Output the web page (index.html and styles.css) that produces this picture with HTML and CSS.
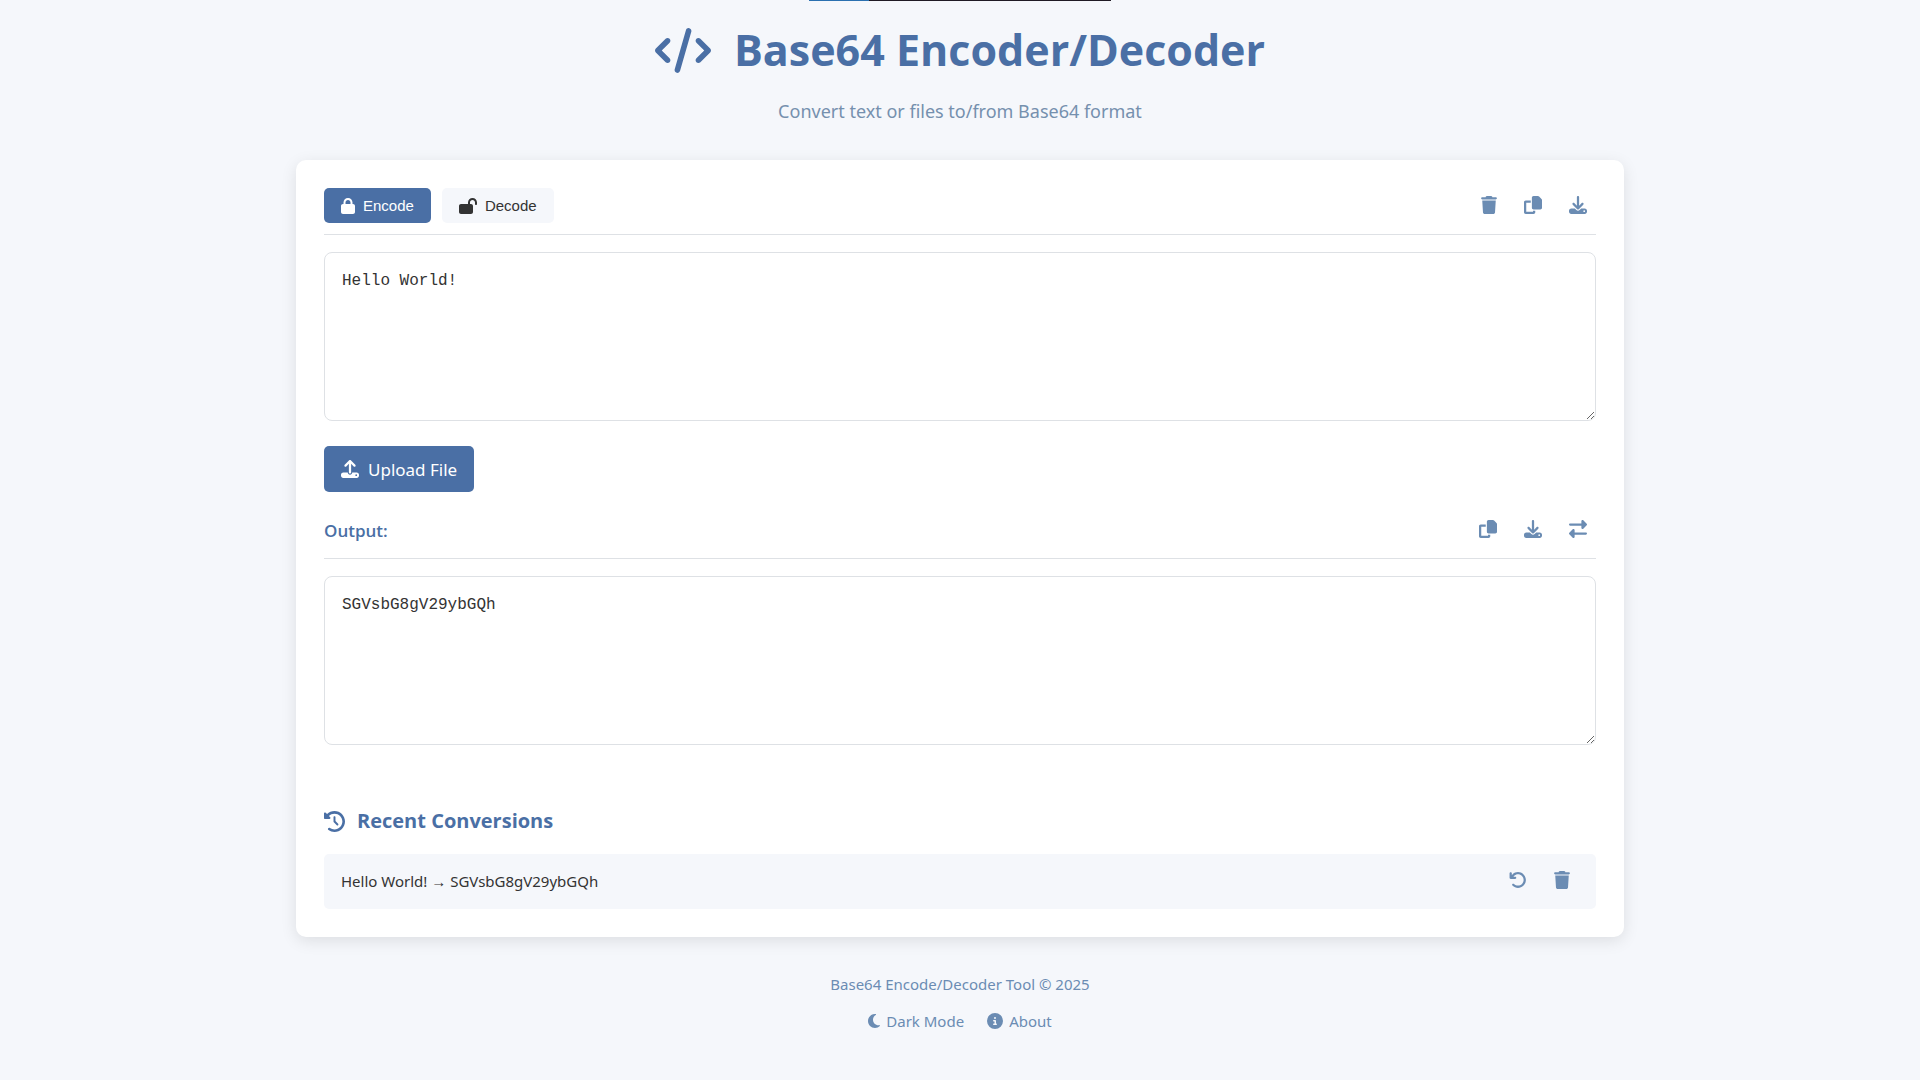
FILE: index.html
```html
<!DOCTYPE html>
<html lang="en">
<head>
<meta charset="UTF-8">
<meta name="viewport" content="width=device-width, initial-scale=1">
<title>Base64 Encoder/Decoder</title>
<link rel="stylesheet" href="styles.css">
</head>
<body>
<svg class="sprite" aria-hidden="true">
  <symbol id="code" viewBox="0 0 640 512"><path d="M392.8 1.2c-17-4.9-34.7 5-39.6 22l-128 448c-4.9 17 5 34.7 22 39.6s34.7-5 39.6-22l128-448c4.9-17-5-34.7-22-39.6zm80.6 120.1c-12.5 12.5-12.5 32.8 0 45.3L562.7 256l-89.4 89.4c-12.5 12.5-12.5 32.8 0 45.3s32.8 12.5 45.3 0l112-112c12.5-12.5 12.5-32.8 0-45.3l-112-112c-12.5-12.5-32.8-12.5-45.3 0zm-306.7 0c-12.5-12.5-32.8-12.5-45.3 0l-112 112c-12.5 12.5-12.5 32.8 0 45.3l112 112c12.5 12.5 32.8 12.5 45.3 0s12.5-32.8 0-45.3L77.3 256l89.4-89.4c12.5-12.5 12.5-32.8 0-45.3z"/></symbol>
  <symbol id="lock" viewBox="0 0 448 512"><path d="M144 144v48H304V144c0-44.2-35.8-80-80-80s-80 35.8-80 80zM80 192V144C80 64.5 144.5 0 224 0s144 64.5 144 144v48h16c35.3 0 64 28.7 64 64V448c0 35.3-28.7 64-64 64H64c-35.3 0-64-28.7-64-64V256c0-35.3 28.7-64 64-64H80z"/></symbol>
  <symbol id="lock-open" viewBox="0 0 576 512"><path d="M352 144c0-44.2 35.8-80 80-80s80 35.8 80 80v48c0 17.7 14.3 32 32 32s32-14.3 32-32V144C576 64.5 511.5 0 432 0S288 64.5 288 144v48H64c-35.3 0-64 28.7-64 64V448c0 35.3 28.7 64 64 64H384c35.3 0 64-28.7 64-64V256c0-35.3-28.7-64-64-64H352V144z"/></symbol>
  <symbol id="trash" viewBox="0 0 448 512"><path d="M135.2 17.7L128 32H32C14.3 32 0 46.3 0 64S14.3 96 32 96H416c17.7 0 32-14.3 32-32s-14.3-32-32-32H320l-7.2-14.3C307.4 6.8 296.3 0 284.2 0H163.8c-12.1 0-23.2 6.8-28.6 17.7zM416 128H32L53.2 467c1.6 25.3 22.6 45 47.9 45H346.9c25.3 0 46.3-19.7 47.9-45L416 128z"/></symbol>
  <symbol id="copy" viewBox="0 0 512 512"><path d="M272 0H396.1c12.7 0 24.9 5.1 33.9 14.1l67.9 67.9c9 9 14.1 21.2 14.1 33.9V336c0 26.5-21.5 48-48 48H272c-26.5 0-48-21.5-48-48V48c0-26.5 21.5-48 48-48zM48 128H192v64H64V448H256V416h64v48c0 26.5-21.5 48-48 48H48c-26.5 0-48-21.5-48-48V176c0-26.5 21.5-48 48-48z"/></symbol>
  <symbol id="download" viewBox="0 0 512 512"><path d="M288 32c0-17.7-14.3-32-32-32s-32 14.3-32 32V274.7l-73.4-73.4c-12.5-12.5-32.8-12.5-45.3 0s-12.5 32.8 0 45.3l128 128c12.5 12.5 32.8 12.5 45.3 0l128-128c12.5-12.5 12.5-32.8 0-45.3s-32.8-12.5-45.3 0L288 274.7V32zM64 352c-35.3 0-64 28.7-64 64v32c0 35.3 28.7 64 64 64H448c35.3 0 64-28.7 64-64V416c0-35.3-28.7-64-64-64H346.5l-45.3 45.3c-25 25-65.5 25-90.5 0L165.5 352H64zm368 56a24 24 0 1 1 0 48 24 24 0 1 1 0-48z"/></symbol>
  <symbol id="upload" viewBox="0 0 512 512"><path d="M288 109.3V352c0 17.7-14.3 32-32 32s-32-14.3-32-32V109.3l-73.4 73.4c-12.5 12.5-32.8 12.5-45.3 0s-12.5-32.8 0-45.3l128-128c12.5-12.5 32.8-12.5 45.3 0l128 128c12.5 12.5 12.5 32.8 0 45.3s-32.8 12.5-45.3 0L288 109.3zM64 352H192c0 35.3 28.7 64 64 64s64-28.7 64-64H448c35.3 0 64 28.7 64 64v32c0 35.3-28.7 64-64 64H64c-35.3 0-64-28.7-64-64V416c0-35.3 28.7-64 64-64zM432 456a24 24 0 1 0 0-48 24 24 0 1 0 0 48z"/></symbol>
  <symbol id="swap" viewBox="0 0 512 512"><path d="M32 96l320 0V32c0-12.9 7.8-24.6 19.8-29.6s25.7-2.2 34.9 6.9l96 96c6 6 9.4 14.1 9.4 22.6s-3.4 16.6-9.4 22.6l-96 96c-9.2 9.2-22.9 11.9-34.9 6.9s-19.8-16.6-19.8-29.6V160L32 160c-17.7 0-32-14.3-32-32s14.3-32 32-32zM480 352c17.7 0 32 14.3 32 32s-14.3 32-32 32H160v64c0 12.9-7.8 24.6-19.8 29.6s-25.7 2.2-34.9-6.9l-96-96c-6-6-9.4-14.1-9.4-22.6s3.4-16.6 9.4-22.6l96-96c9.2-9.2 22.9-11.9 34.9-6.9s19.8 16.6 19.8 29.6l0 64H480z"/></symbol>
  <symbol id="history" viewBox="0 0 512 512"><path d="M75 75L41 41C25.9 25.9 0 36.6 0 57.9V168c0 13.3 10.7 24 24 24H134.1c21.4 0 32.1-25.9 17-41l-30.8-30.8C155 85.5 203 64 256 64c106 0 192 86 192 192s-86 192-192 192c-40.8 0-78.6-12.7-109.7-34.4c-14.5-10.1-34.4-6.6-44.6 7.9s-6.6 34.4 7.9 44.6C151.2 495 201.7 512 256 512c141.4 0 256-114.6 256-256S397.4 0 256 0C185.3 0 121.3 28.7 75 75zm181 53c-13.3 0-24 10.7-24 24V256c0 6.4 2.5 12.5 7 17l72 72c9.4 9.4 24.6 9.4 33.9 0s9.4-24.6 0-33.9l-65-65V152c0-13.3-10.7-24-24-24z"/></symbol>
  <symbol id="undo" viewBox="0 0 512 512"><path d="M125.7 160H176c17.7 0 32 14.3 32 32s-14.3 32-32 32H48c-17.7 0-32-14.3-32-32V64c0-17.7 14.3-32 32-32s32 14.3 32 32v51.2L97.6 97.6c87.5-87.5 229.3-87.5 316.8 0s87.5 229.3 0 316.8s-229.3 87.5-316.8 0c-12.5-12.5-12.5-32.8 0-45.3s32.8-12.5 45.3 0c62.5 62.5 163.8 62.5 226.3 0s62.5-163.8 0-226.3s-163.8-62.5-226.3 0L125.7 160z"/></symbol>
  <symbol id="moon" viewBox="0 0 384 512"><path d="M223.5 32C100 32 0 132.3 0 256S100 480 223.5 480c60.6 0 115.5-24.2 155.8-63.4c5-4.9 6.3-12.5 3.1-18.7s-10.1-9.7-17-8.5c-9.8 1.7-19.8 2.6-30.1 2.6c-96.9 0-175.5-78.8-175.5-176c0-65.8 36-123.1 89.3-153.3c6.1-3.5 9.2-10.5 7.7-17.3s-7.3-11.9-14.3-12.5c-6.3-.5-12.6-.8-19-.8z"/></symbol>
  <symbol id="info" viewBox="0 0 512 512"><path d="M256 512A256 256 0 1 0 256 0a256 256 0 1 0 0 512zM216 336h24V272H216c-13.3 0-24-10.7-24-24s10.7-24 24-24h48c13.3 0 24 10.7 24 24v88h8c13.3 0 24 10.7 24 24s-10.7 24-24 24H216c-13.3 0-24-10.7-24-24s10.7-24 24-24zm40-208a32 32 0 1 1 0 64 32 32 0 1 1 0-64z"/></symbol>
</svg>

<div class="strip"></div>

<header class="page-header">
  <h1 class="title"><svg class="icon icon-code"><use href="#code"/></svg><span>Base64 Encoder/Decoder</span></h1>
  <p class="subtitle">Convert text or files to/from Base64 format</p>
</header>

<main class="card">
  <div class="toolbar">
    <div class="modes">
      <button type="button" class="mode mode-active"><svg class="icon icon-lock"><use href="#lock"/></svg>Encode</button>
      <button type="button" class="mode"><svg class="icon icon-open"><use href="#lock-open"/></svg>Decode</button>
    </div>
    <div class="actions">
      <button type="button" class="action" aria-label="Clear input"><svg class="icon icon-trash"><use href="#trash"/></svg></button>
      <button type="button" class="action" aria-label="Copy input"><svg class="icon"><use href="#copy"/></svg></button>
      <button type="button" class="action" aria-label="Download input"><svg class="icon"><use href="#download"/></svg></button>
    </div>
  </div>
  <textarea class="field" aria-label="Input" spellcheck="false">Hello World!</textarea>

  <button type="button" class="upload"><svg class="icon"><use href="#upload"/></svg>Upload File</button>

  <div class="toolbar">
    <label class="output-label" for="output">Output:</label>
    <div class="actions">
      <button type="button" class="action" aria-label="Copy output"><svg class="icon"><use href="#copy"/></svg></button>
      <button type="button" class="action" aria-label="Download output"><svg class="icon"><use href="#download"/></svg></button>
      <button type="button" class="action" aria-label="Swap input and output"><svg class="icon"><use href="#swap"/></svg></button>
    </div>
  </div>
  <textarea class="field" id="output" readonly spellcheck="false">SGVsbG8gV29ybGQh</textarea>

  <section class="history">
    <h2 class="history-title"><svg class="icon icon-history"><use href="#history"/></svg>Recent Conversions</h2>
    <ul class="history-list">
      <li class="history-item">
        <span>Hello World! → SGVsbG8gV29ybGQh</span>
        <div class="actions">
          <button type="button" class="action" aria-label="Restore"><svg class="icon"><use href="#undo"/></svg></button>
          <button type="button" class="action" aria-label="Delete"><svg class="icon icon-trash"><use href="#trash"/></svg></button>
        </div>
      </li>
    </ul>
  </section>
</main>

<footer class="page-footer">
  <p class="copyright">Base64 Encode/Decoder Tool © 2025</p>
  <nav class="links">
    <a href="#" class="link"><svg class="icon icon-moon"><use href="#moon"/></svg>Dark Mode</a>
    <a href="#" class="link"><svg class="icon icon-info"><use href="#info"/></svg>About</a>
  </nav>
</footer>
</body>
</html>
```
FILE: styles.css
```css
* {
  box-sizing: border-box;
  margin: 0;
  padding: 0;
}

body {
  min-height: 100vh;
  background: #f5f7fb;
  color: #333;
  font-family: "Noto Sans", "Open Sans", sans-serif;
  font-size: 15px;
}

.sprite {
  display: none;
}

.icon {
  flex: none;
  width: 18px;
  height: 18px;
  fill: currentColor;
}

.strip {
  width: 302px;
  height: 1px;
  margin: 0 auto;
  background: linear-gradient(to right, #2a70b0 60px, #1f1a24 60px);
}

.page-header {
  display: flex;
  flex-direction: column;
  gap: 16px;
  padding: 16px 0 37px;
  text-align: center;
}

.title {
  display: flex;
  align-items: center;
  justify-content: center;
  gap: 23px;
  color: #4a6fa5;
  font-family: "Open Sans", "Noto Sans", sans-serif;
  font-size: 43px;
  font-weight: 700;
  line-height: 66px;
}

.icon-code {
  width: 56px;
  height: 45px;
}

.subtitle {
  color: #7590ae;
  font-size: 18px;
  line-height: 24px;
}

.card {
  width: calc(100% - 64px);
  max-width: 1328px;
  margin: 0 auto;
  padding: 28px;
  border-radius: 10px;
  background: #fff;
  box-shadow: 0 4px 16px rgba(0, 0, 0, 0.1);
}

.toolbar {
  display: flex;
  align-items: center;
  justify-content: space-between;
  margin-bottom: 17px;
  padding-bottom: 11px;
  border-bottom: 1px solid #dee1e5;
}

.modes {
  display: flex;
  gap: 11px;
}

.mode {
  display: flex;
  align-items: center;
  gap: 8px;
  height: 35px;
  padding: 0 17px;
  border: 0;
  border-radius: 5px;
  background: #f5f7fb;
  color: #333;
  font-family: "Liberation Sans", Arial, sans-serif;
  font-size: 15px;
}

.mode-active {
  background: #4a6fa5;
  color: #fff;
}

.icon-lock {
  width: 14px;
  height: 16px;
}

.icon-open {
  width: 18px;
  height: 16px;
}

.actions {
  display: flex;
  gap: 9px;
}

.action {
  display: flex;
  align-items: center;
  justify-content: center;
  height: 34px;
  padding: 0 9px 2px;
  border: 0;
  background: none;
  color: #6b8cb3;
}

.icon-trash {
  width: 16px;
}

.field {
  display: block;
  width: 100%;
  height: 169px;
  padding: 17px;
  border: 1px solid #dee1e5;
  border-radius: 8px;
  outline: 0;
  background: #fff;
  color: #333;
  font-family: "Liberation Mono", Consolas, monospace;
  font-size: 16px;
  line-height: 22px;
  resize: vertical;
}

.upload {
  display: flex;
  align-items: center;
  gap: 9px;
  height: 46px;
  margin: 25px 0 21px;
  padding: 0 17px;
  border: 0;
  border-radius: 5px;
  background: #4a6fa5;
  color: #fff;
  font-family: inherit;
  font-size: 17px;
}

.output-label {
  color: #4a6fa5;
  font-family: "Open Sans", "Noto Sans", sans-serif;
  font-size: 17px;
  font-weight: 600;
}

.history {
  display: flex;
  flex-direction: column;
  gap: 17px;
  padding-top: 60px;
}

.history-title {
  display: flex;
  align-items: center;
  gap: 12px;
  color: #4a6fa5;
  font-family: "Open Sans", "Noto Sans", sans-serif;
  font-size: 20px;
  font-weight: 700;
  line-height: 32px;
}

.icon-history {
  width: 21px;
  height: 21px;
}

.history-list {
  list-style: none;
}

.history-item {
  display: flex;
  align-items: center;
  justify-content: space-between;
  padding: 10px 17px 11px;
  border-radius: 5px;
  background: #f5f7fb;
}

.page-footer {
  display: flex;
  flex-direction: column;
  align-items: center;
  gap: 13px;
  padding: 35px 0;
  color: #6b8cb3;
  line-height: 24px;
}

.links {
  display: flex;
  gap: 23px;
}

.link {
  display: flex;
  align-items: center;
  gap: 6px;
  color: inherit;
  text-decoration: none;
}

.icon-moon {
  width: 12px;
  height: 16px;
}

.icon-info {
  width: 16px;
  height: 16px;
}
```
